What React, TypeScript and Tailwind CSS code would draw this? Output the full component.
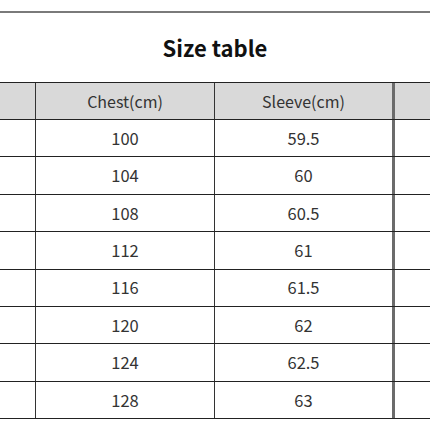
import React from "react";

const rows: [string, string][] = [
  ["100", "59.5"],
  ["104", "60"],
  ["108", "60.5"],
  ["112", "61"],
  ["116", "61.5"],
  ["120", "62"],
  ["124", "62.5"],
  ["128", "63"],
];

export default function App() {
  return (
    <div
      className="w-[430px] h-[430px] bg-white overflow-hidden text-[#333]"
      style={{ fontFamily: '"Noto Sans CJK SC", "Noto Sans", sans-serif' }}
    >
      <div className="h-[11px]" />
      <div className="h-[2px] bg-[#7a7a7a]" />
      <div className="h-[69px] flex items-center justify-center pb-[2px]">
        <span className="text-[22px] font-bold text-[#111] leading-none">Size table</span>
      </div>
      <div className="border-t-[1.5px] border-[#222]">
        <div className="flex h-[37px] bg-[#d9d9d9] border-b-[1.5px] border-[#222] text-[16px]">
          <div className="w-[35px]" />
          <div className="w-[179px] border-l-[1.5px] border-[#333] flex items-center justify-center">
            Chest(cm)
          </div>
          <div className="w-[178px] border-l-[1.5px] border-[#333] flex items-center justify-center">
            Sleeve(cm)
          </div>
          <div className="flex-1 border-l-[3px] border-[#6b6b6b]" />
        </div>
        {rows.map(([c, s], i) => (
          <div
            key={i}
            className="flex h-[37.4px] border-b-[1.5px] border-[#222] text-[16.5px]"
          >
            <div className="w-[35px]" />
            <div className="w-[179px] border-l-[1.5px] border-[#333] flex items-center justify-center">
              {c}
            </div>
            <div className="w-[178px] border-l-[1.5px] border-[#333] flex items-center justify-center">
              {s}
            </div>
            <div className="flex-1 border-l-[3px] border-[#6b6b6b]" />
          </div>
        ))}
      </div>
    </div>
  );
}
